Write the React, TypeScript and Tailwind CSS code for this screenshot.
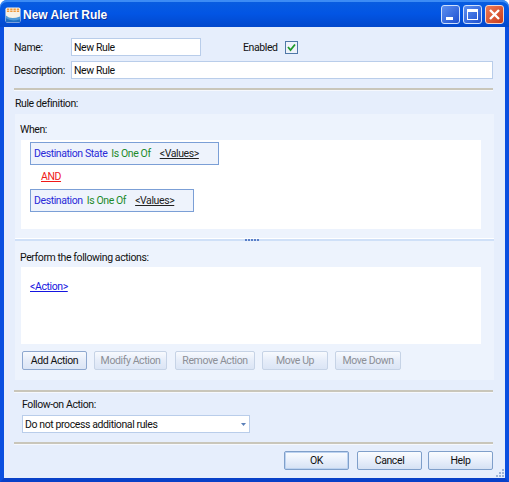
const font = "font-['Roboto','Liberation_Sans',Arial,sans-serif]";

function Sep({ className = "" }: { className?: string }) {
  return (
    <div className={"h-[3px] shrink-0 ml-[10px] mr-[12px] bg-[#f6f8fd] border-t-2 border-[#c9c6ba] " + className} />
  );
}

function ActionButton({ label, w, active }: { label: string; w: string; active?: boolean }) {
  return (
    <div
      className={
        w +
        " h-[19px] flex items-center justify-center whitespace-nowrap rounded-[2px] border bg-gradient-to-b from-[#f8fafe] via-[#e6edf9] to-[#dbe5f5] " +
        (active ? "border-[#8ea8cf] text-[#111]" : "border-[#c6d3e6] text-[#8c8f96]")
      }
    >
      {label}
    </div>
  );
}

function FooterButton({ label, isDefault }: { label: string; isDefault?: boolean }) {
  return (
    <div
      className={
        "w-[65px] h-[19px] flex items-center justify-center rounded-[2px] border bg-gradient-to-b from-[#fafcff] via-[#e8effb] to-[#d5e1f4] text-[#111] border-[#7f9fca] " +
        (isDefault ? "shadow-[inset_0_0_0_1px_#bcd2f0]" : "")
      }
    >
      {label}
    </div>
  );
}

function Condition({ field, w }: { field: string; w: string }) {
  return (
    <div className={w + " h-[23px] flex items-center whitespace-nowrap pl-[3px] border border-[#7b9fd6] bg-[#eef3fc]"}>
      <span className="text-[#2a2ad8]">{field}</span>
      <span className="ml-[4px] text-[#1c8a2a]">Is One Of</span>
      <span className="ml-[9px] text-[#222] underline">&lt;Values&gt;</span>
    </div>
  );
}

export default function App() {
  return (
    <div className={font + " relative w-[509px] h-[482px] flex flex-col text-[10.5px] tracking-[-0.4px] leading-[13px] text-[#111] bg-white overflow-hidden"}>
      <div className="h-[27px] shrink-0 flex items-center rounded-t-[7px] pl-[5px] pr-[5px] pt-[1px] bg-gradient-to-b from-[#0a5ee0] via-[#0255e4] to-[#0248cc] shadow-[inset_0_2px_0_#3c8cf5]">
        <svg width="16" height="16" viewBox="0 0 17 17" className="shrink-0 mt-[2px]">
          <rect x="0.5" y="0.5" width="16" height="16" rx="2" fill="#f6f1e6" />
          <path d="M2 2.5 H15 M2 4.5 H15" stroke="#ef9a3c" strokeWidth="1.6" strokeDasharray="2.5 1" />
          <path d="M1 9 Q6 14 16 10 V14 Q8 17 1 13 Z" fill="#4f9ad8" />
          <path d="M1 12 Q7 16 16 13 V16 H1 Z" fill="#1f6fc4" />
        </svg>
        <span className="ml-[2px] mt-[2px] font-['Liberation_Sans',Arial,sans-serif] tracking-normal text-[12px] font-bold text-white [text-shadow:1px_1px_0_#0a2f9a]">New Alert Rule</span>
        <div className="ml-auto flex items-center gap-[3px]">
          <div className="relative w-[19px] h-[19px] rounded-[3px] border border-[#cfe0fb] bg-gradient-to-br from-[#5d8ff0] to-[#1f4fd0]">
            <div className="absolute left-[4px] bottom-[3px] w-[7px] h-[3px] bg-white" />
          </div>
          <div className="relative w-[19px] h-[19px] rounded-[3px] border border-[#cfe0fb] bg-gradient-to-br from-[#5d8ff0] to-[#1f4fd0]">
            <div className="absolute left-[3px] top-[3px] w-[11px] h-[11px] border border-white border-t-[3px]" />
          </div>
          <div className="flex items-center justify-center w-[19px] h-[19px] rounded-[3px] border border-[#f5d6cc] bg-gradient-to-br from-[#ee7a55] to-[#c93a18]">
            <svg width="13" height="13" viewBox="0 0 13 13">
              <path d="M2 2 L11 11 M11 2 L2 11" stroke="#fff" strokeWidth="2.4" />
            </svg>
          </div>
        </div>
      </div>

      <div className="relative flex-1 min-h-0 flex flex-col border-x-[4px] border-b-[4px] border-x-[#0a4fe0] border-b-[#0840c8] bg-[#e6eefc]">
        <div className="mt-[11px] h-[18px] flex items-center ml-[10px]">
          <span className="w-[57px]">Name:</span>
          <div className="w-[130px] h-[18px] flex items-center pl-[2px] bg-white border border-[#b9cdea]">New Rule</div>
          <span className="ml-[42px] w-[42px]">Enabled</span>
          <div className="w-[13px] h-[13px] flex items-center justify-center bg-[#eef2fa] border border-[#4f78a8]">
            <svg width="9" height="9" viewBox="0 0 9 9">
              <path d="M1 4 L3.5 7 L8 1.5" fill="none" stroke="#1f9a2a" strokeWidth="1.8" />
            </svg>
          </div>
        </div>

        <div className="mt-[5px] h-[18px] flex items-center ml-[10px] mr-[12px]">
          <span className="w-[57px]">Description:</span>
          <div className="flex-1 h-[18px] flex items-center pl-[2px] bg-white border border-[#b9cdea]">New Rule</div>
        </div>

        <Sep className="mt-[9px]" />

        <div className="ml-[11px] mt-[6px] h-[13px]">Rule definition:</div>

        <div className="mt-[4px] ml-[11px] mr-[11px] h-[266px] flex flex-col bg-[#edf3fd]">
          <div className="ml-[5px] mt-[9px] h-[13px]">When:</div>
          <div className="ml-[6px] mr-[13px] mt-[4px] h-[89px] bg-white flex flex-col pl-[9px] pt-[2px]">
            <Condition field="Destination State" w="w-[189px]" />
            <span className="ml-[11px] mt-[5px] h-[13px] mb-[6px] text-[#f01818] underline">AND</span>
            <Condition field="Destination" w="w-[164px]" />
          </div>

          <div className="relative mt-[9px] h-[3px] bg-[#cfe0f8] border-t border-white">
            <div className="absolute left-[230px] top-0 flex gap-[1px]">
              <i className="w-[2px] h-[2px] bg-[#5a7fc8]" />
              <i className="w-[2px] h-[2px] bg-[#5a7fc8]" />
              <i className="w-[2px] h-[2px] bg-[#5a7fc8]" />
              <i className="w-[2px] h-[2px] bg-[#5a7fc8]" />
              <i className="w-[2px] h-[2px] bg-[#5a7fc8]" />
            </div>
          </div>

          <div className="ml-[5px] mt-[10px] h-[13px]">Perform the following actions:</div>
          <div className="ml-[6px] mr-[13px] mt-[3px] h-[77px] bg-white pl-[9px] pt-[13px]">
            <span className="text-[#1515e0] underline">&lt;Action&gt;</span>
          </div>

          <div className="mt-[7px] ml-[7px] flex">
            <ActionButton label="Add Action" w="w-[65px]" active />
            <div className="ml-[7px]"><ActionButton label="Modify Action" w="w-[73px]" /></div>
            <div className="ml-[8px]"><ActionButton label="Remove Action" w="w-[80px]" /></div>
            <div className="ml-[7px]"><ActionButton label="Move Up" w="w-[66px]" /></div>
            <div className="ml-[7px]"><ActionButton label="Move Down" w="w-[66px]" /></div>
          </div>
        </div>

        <Sep className="mt-[10px]" />

        <div className="ml-[18px] mt-[5px] h-[13px]">Follow-on Action:</div>
        <div className="ml-[18px] mt-[4px] w-[228px] h-[18px] flex items-center pl-[2px] pr-[3px] bg-white border border-[#b9cdea]">
          <span>Do not process additional rules</span>
          <svg width="5" height="3" viewBox="0 0 5 3" className="ml-auto">
            <path d="M0 0 H5 L2.5 3 Z" fill="#5a7fb8" />
          </svg>
        </div>

        <Sep className="mt-[9px]" />

        <div className="mt-[6px] flex justify-end mr-[12px]">
          <FooterButton label="OK" isDefault />
          <div className="ml-[8px]"><FooterButton label="Cancel" /></div>
          <div className="ml-[6px]"><FooterButton label="Help" /></div>
        </div>

        <svg width="9" height="9" viewBox="0 0 9 9" className="absolute right-0 bottom-0">
          <g fill="#9db4d6">
            <rect x="6" y="0" width="2" height="2" />
            <rect x="3" y="3" width="2" height="2" />
            <rect x="6" y="3" width="2" height="2" />
            <rect x="0" y="6" width="2" height="2" />
            <rect x="3" y="6" width="2" height="2" />
            <rect x="6" y="6" width="2" height="2" />
          </g>
        </svg>
      </div>
    </div>
  );
}
